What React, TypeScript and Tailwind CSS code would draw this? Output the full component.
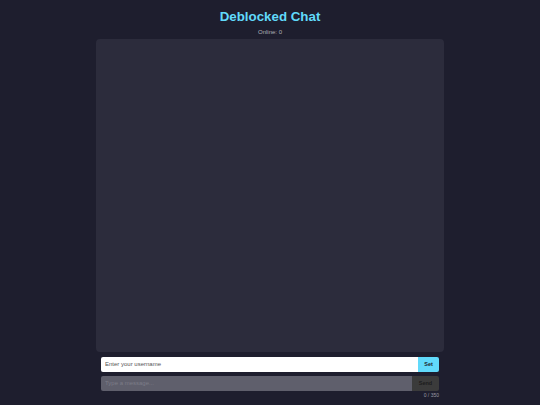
import React from "react";

export default function App() {
  return (
    <div className="min-h-[405px] w-full bg-[#1e1e2e] font-['Liberation_Sans',Arial,sans-serif]">
      <div className="mx-auto flex w-[348px] flex-col">
        <h1 className="pt-[9px] text-center text-[13.33px] font-bold leading-[16px] text-[#61dafb]">
          Deblocked Chat
        </h1>
        <div className="mt-[3px] text-center text-[6px] leading-[8px] text-[#b0b0b8]">Online: 0</div>
        <div className="mt-[3px] h-[313px] rounded-[4px] bg-[#2c2c3c]" />
        <div className="px-[5px]">
          <div className="mt-[5px] flex h-[15px]">
            <input
              className="min-w-0 flex-1 rounded-l-[2px] bg-white px-[4px] text-[6px] text-black outline-none placeholder:text-[#555]"
              placeholder="Enter your username"
            />
            <button className="w-[21px] rounded-r-[2px] bg-[#61dafb] text-[5.5px] font-bold text-[#1e1e2e]">
              Set
            </button>
          </div>
          <div className="mt-[4px] flex h-[15px]">
            <input
              className="min-w-0 flex-1 rounded-l-[2px] bg-[#5f5f6c] px-[4px] text-[6px] text-white outline-none placeholder:text-[#7c7c88]"
              placeholder="Type a message..."
            />
            <button className="w-[27px] rounded-r-[2px] bg-[#3b3b3b] text-[5.5px] font-bold text-[#1c1c1c]">
              Send
            </button>
          </div>
          <div className="mt-[1px] text-right text-[5px] leading-[7px] text-[#9a9aa4]">0 / 350</div>
        </div>
      </div>
    </div>
  );
}
